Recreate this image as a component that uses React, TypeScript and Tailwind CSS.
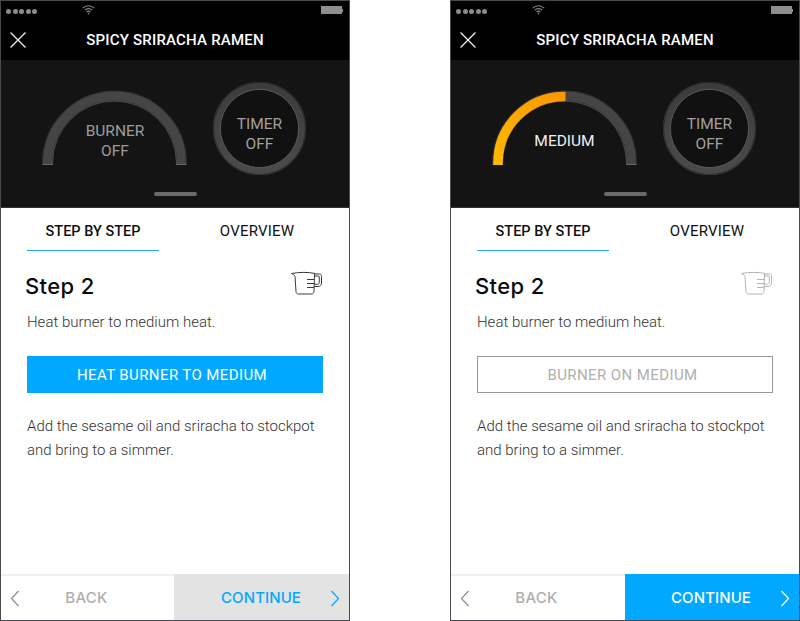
const roboto = "font-['Roboto',sans-serif]";

const StatusBar = () => (
  <div className="h-[19px] bg-black flex items-center relative">
    <div className="flex gap-[1.5px] ml-[5px] mt-[1px]">
      {[0, 1, 2, 3, 4].map((i) => (
        <span key={i} className="w-[5px] h-[5px] rounded-full bg-[#8c8c8c]" />
      ))}
    </div>
    <svg className="absolute left-[81px] top-[4px]" width="13" height="10" viewBox="0 0 13 10" fill="none" stroke="#8c8c8c" strokeWidth="1.1">
      <path d="M.8 3.2a8 8 0 0 1 11.4 0" />
      <path d="M2.8 5.2a5.2 5.2 0 0 1 7.4 0" />
      <path d="M4.6 7a2.7 2.7 0 0 1 3.8 0" />
      <circle cx="6.5" cy="8.6" r=".8" fill="#8c8c8c" stroke="none" />
    </svg>
    <div className="absolute left-[320px] top-[5px] flex items-center">
      <span className="w-[21px] h-[8px] bg-[#8f8f8f]" />
      <span className="w-[1px] h-[3px] bg-[#8f8f8f]" />
    </div>
  </div>
);

const Gauge = ({ on }: { on: boolean }) => (
  <svg width="148" height="78" viewBox="0 0 148 78" fill="none">
    <path d="M6.500 75 V73 A67 67 0 0 1 140.500 73 V75" stroke="#2c2c2c" strokeWidth="11" />
    <path d="M6.500 75 V73 A67 67 0 0 1 140.500 73 V75" stroke="#454545" strokeWidth="9" />
    <path d="M11.500 75 V73 A62 62 0 0 1 135.500 73 V75" stroke="#606060" strokeWidth="0.8" opacity="0.8" />
    <path d="M1.500 74.500 H11.500 M135.500 74.500 H145.500" stroke="#6a6a6a" strokeWidth="1" />
    {on && (
      <>
        <defs>
          <linearGradient id="heat" x1="0" y1="1" x2="1" y2="0">
            <stop offset="0" stopColor="#ffb800" />
            <stop offset="1" stopColor="#f99600" />
          </linearGradient>
        </defs>
        <path d="M7 75 V73 A66.500 66.500 0 0 1 73.500 6.500 H74.500" stroke="url(#heat)" strokeWidth="9.500" />
      </>
    )}
  </svg>
);

const TimerRing = () => (
  <div className="relative w-[94px] h-[94px]">
    <svg width="94" height="94" viewBox="0 0 94 94" fill="none">
      <defs>
        <linearGradient id="ring" x1="0" y1="0" x2="0" y2="1">
          <stop offset="0" stopColor="#3c3c3c" />
          <stop offset="1" stopColor="#4a4a4a" />
        </linearGradient>
      </defs>
      <circle cx="46.500" cy="46.500" r="42.750" stroke="url(#ring)" strokeWidth="7.500" />
      <circle cx="46.500" cy="46.500" r="46" stroke="#2a2a2a" strokeWidth="1" />
      <circle cx="46.500" cy="46.500" r="39" stroke="#5e5e5e" strokeWidth="1" />
      <circle cx="46.500" cy="46.500" r="38.500" fill="#111111" />
    </svg>
    <div className="absolute inset-0 pt-[10px] pr-[1px] flex flex-col items-center justify-center text-[15.500px] leading-[20px] text-[#a0a0a0]">
      <span>TIMER</span>
      <span>OFF</span>
    </div>
  </div>
);

const CupIcon = ({ faded }: { faded: boolean }) => (
  <svg width="32" height="26" viewBox="0 0 32 26" fill="none" stroke={faded ? "#b4b4b4" : "#3a3a3a"} strokeWidth="1">
    <path d="M.5 2.500 C8 1 18 1 24 2.500 L23.500 4 L23 20.500 C23 22 22 23 20.500 23 H7.500 C6 23 5 22 5 20.500 L4 5.500 C4 4 2 3.500 .5 2.500 Z" />
    <path d="M24 3 H28.500 C30 3 30.500 4 30.500 5.500 V12 C30.500 14 29 15.500 27 15.500 H23" />
    <path d="M23.500 5 H27.500 C28 5 28.300 5.300 28.300 6 V11.500 C28.300 12.500 27.500 13.200 26.500 13.200 H23" />
    <path d="M16 8.500 H23 M16 12.500 H23 M16 16.500 H23" />
  </svg>
);

const Phone = ({ on }: { on: boolean }) => (
  <div className={`w-[350px] h-[621px] border border-[#4a4a50] bg-white flex flex-col ${roboto}`}>
    <StatusBar />
    <div className="h-[40px] bg-black flex items-center relative shrink-0">
      <svg className="absolute left-[9px] top-[12px]" width="16" height="16" viewBox="0 0 16 16" stroke="#f2f2f2" strokeWidth="1.300" fill="none">
        <path d="M.5 .5 L15.500 15.500 M15.500 .5 L.5 15.500" />
      </svg>
      <span className="w-full text-center text-[15px] font-medium tracking-[0.2px] text-white">SPICY SRIRACHA RAMEN</span>
    </div>

    <div className="h-[148px] bg-[#141414] border-b border-[#333] relative shrink-0 flex items-start">
      <div className="relative ml-[40px] mt-[30px] w-[148px] h-[78px]">
        <Gauge on={on} />
        {on ? (
          <span className="absolute left-0 right-[1px] top-[41px] text-center text-[15.500px] leading-[20px] text-[#f0f0f0]">MEDIUM</span>
        ) : (
          <div className="absolute left-0 right-0 top-[32px] text-center text-[15.500px] leading-[19.500px] text-[#9c9c9c]">
            BURNER
            <br />
            OFF
          </div>
        )}
      </div>
      <div className="ml-[24px] mt-[22px]">
        <TimerRing />
      </div>
      <span className="absolute left-[153px] bottom-[11px] w-[43px] h-[4px] rounded-full bg-[#6a6a6a]" />
    </div>

    <div className="flex h-[43px] shrink-0">
      <div className="ml-[26px] w-[132px] border-b border-[#1fa8ee] pt-[4px] text-center text-[14.500px] leading-[39px] font-medium text-[#111]">STEP BY STEP</div>
      <div className="ml-[32px] w-[132px] pt-[4px] text-center text-[15px] leading-[39px] tracking-[0.2px] text-[#111]">OVERVIEW</div>
    </div>

    <div className="flex-1 px-[26px]">
      <div className="flex items-start justify-between mt-[19px] h-[36px]">
        <span className="-ml-[2px] font-['Inter',sans-serif] font-medium text-[22px] leading-[32px] tracking-[0.4px] text-[#0a0a0a]">Step 2</span>
        <div className="mt-[1px]">
          <CupIcon faded={on} />
        </div>
      </div>
      <p className="text-[15px] font-light leading-[24px] text-[#333] mt-[4px]">Heat burner to medium heat.</p>
      {on ? (
        <div className="mt-[22px] h-[37px] border border-[#9a9a9a] pr-[5px] text-center text-[15px] leading-[36px] tracking-[0.4px] text-[#b0b0b0]">BURNER ON MEDIUM</div>
      ) : (
        <div className="mt-[22px] h-[37px] bg-[#00a9ff] pr-[6px] pt-[1px] text-center text-[15px] leading-[37px] tracking-[0.4px] text-white">HEAT BURNER TO MEDIUM</div>
      )}
      <p className="text-[15px] font-light leading-[24.500px] text-[#333] mt-[20.500px]">
        Add the sesame oil and sriracha to stockpot
        <br />
        and bring to a simmer.
      </p>
    </div>

    <div className="h-[46px] border-t-2 border-[#f0f0f0] flex shrink-0 font-['Inter',sans-serif] text-[15px] font-medium">
      <div className={`${on ? "w-[174px]" : "w-[173px]"} flex items-center relative`}>
        <svg className="absolute left-[9px] top-[14px]" width="10" height="17" viewBox="0 0 10 17" fill="none" stroke="#8d8d8d" strokeWidth="1.200">
          <path d="M8.500 1 L1.500 8.500 L8.500 16" />
        </svg>
        <span className={`w-full text-center text-[#aeaeae] tracking-[0.3px] ${on ? "pr-[3px]" : "pr-[2px]"}`}>BACK</span>
      </div>
      <div className={`flex-1 -mt-[2px] pt-[3px] flex items-center relative ${on ? "bg-[#00a9ff] text-white" : "bg-[#e3e3e3] text-[#00a9ff]"}`}>
        <span className={`${on ? "ml-[46px]" : "ml-[47px]"} tracking-[0.1px]`}>CONTINUE</span>
        <svg className="absolute right-[9px] top-[16px]" width="10" height="17" viewBox="0 0 10 17" fill="none" stroke={on ? "#fff" : "#00a9ff"} strokeWidth="1.200">
          <path d="M1.500 1 L8.500 8.500 L1.500 16" />
        </svg>
      </div>
    </div>
  </div>
);

export default function App() {
  return (
    <div className="w-[800px] h-[621px] bg-white flex gap-[100px] overflow-hidden">
      <Phone on={false} />
      <Phone on={true} />
    </div>
  );
}
